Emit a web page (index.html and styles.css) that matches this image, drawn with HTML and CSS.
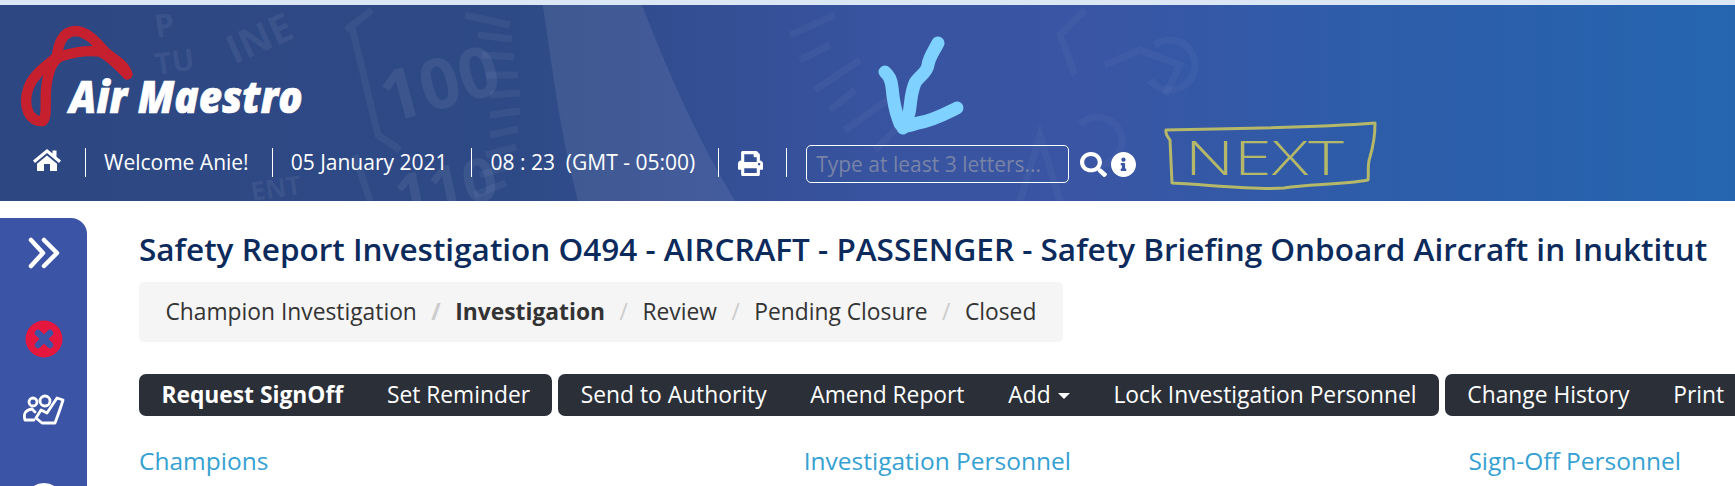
FILE: index.html
```html
<!DOCTYPE html>
<html lang="en">
<head>
<meta charset="utf-8">
<title>Safety Report Investigation</title>
<link rel="stylesheet" href="styles.css">
</head>
<body>
<div class="strip"></div>
<header class="header">
  <svg class="watermark" viewBox="0 0 1735 196" width="1735" height="196" aria-hidden="true">
    <path class="band" d="M542 -5C552 60 560 130 578 196H735C695 130 665 60 640 -5Z"/>
    <g class="mark">
      <text x="0" y="0" font-size="70" transform="translate(388 118) rotate(-15)">100</text>
      <text x="0" y="0" font-size="60" transform="translate(400 214) rotate(-12)">110</text>
      <text x="0" y="0" font-size="40" transform="translate(234 60) rotate(-24)">INE</text>
      <text x="0" y="0" font-size="30" transform="translate(156 70) rotate(-8)">TU</text>
      <text x="0" y="0" font-size="32" transform="translate(156 33) rotate(-8)">P</text>
      <text x="0" y="0" font-size="26" transform="translate(252 196) rotate(-8)">ENT</text>
      <path class="tick" d="M346 25L372 5M352 22L378 130L400 145M355 150L370 196"/>
      <path class="tick" d="M465 10L510 20M478 30L512 34M482 50L514 52M486 70L518 70M490 90L520 88M490 110L520 106M490 130L518 124M486 150L516 142M480 170L512 160M474 190L506 178"/>
      <path class="tick faint" d="M790 30L835 10M800 55L830 40M815 85L860 55M830 105L855 85M845 125L895 90M875 145L905 115"/>
      <path class="tick faint" d="M1075 70L1060 30L1085 5M1105 60L1140 45L1180 60L1165 90"/>
      <path class="tick faint" d="M1020 196L1040 130L1060 196M1080 120A24 24 0 1 1 1100 160M1155 40A25 25 0 1 1 1150 75"/>
    </g>
  </svg>
  <svg class="scribble" viewBox="0 0 1735 196" width="1735" height="196" aria-hidden="true">
    <path class="arrow" d="M938 38C934 46 929 52 928 60C927 68 918 72 915 78C910 90 911 100 909 108C907 116 904 119 903 123"/>
    <path class="arrow" d="M885 67C889 71 891 74 892 82C893 94 896 108 899 116C901 124 908 121 918 118C932 116 945 109 957 103"/>
    <path class="note" d="M1166 125C1165 130 1168 132 1170 135L1172 178L1190 179C1220 181 1260 185 1284 183C1310 179 1340 180 1368 175C1369 168 1367 160 1370 152C1373 142 1375 132 1375 118C1310 123 1230 124 1166 125Z"/>
    <text class="note-text" x="1185" y="170" font-size="48" textLength="159" lengthAdjust="spacingAndGlyphs">NEXT</text>
  </svg>
  <a class="logo" href="#" aria-label="Air Maestro">
    <svg viewBox="0 0 960 360" width="320" height="120">
      <g transform="translate(30 15)">
        <path class="ribbon" d="M98 318C55 322 38 270 55 220C70 175 115 150 140 125C145 90 155 50 195 48C235 48 265 90 290 115C315 135 345 150 352 178"/>
        <path class="ribbon" d="M352 178C325 150 295 120 270 110C225 105 180 115 150 125C122 140 112 180 108 225C105 270 112 305 98 318"/>
      </g>
      <text class="logo-text" x="208" y="309" font-size="135" textLength="700" lengthAdjust="spacingAndGlyphs">Air Maestro</text>
    </svg>
  </a>
  <nav class="nav">
    <a class="nav-icon home" href="#" aria-label="Home">
      <svg viewBox="0 0 28 22" width="28" height="22"><path d="M14 0L0 11.5L2 14L14 4L26 14L28 11.5L23.5 7.8V1.5H19.5V4.4ZM4 14.8L14 6.4L24 14.8V22H17V15H11V22H4Z"/></svg>
    </a>
    <span class="sep"></span>
    <span class="nav-text">Welcome Anie!</span>
    <span class="sep sep-tight"></span>
    <span class="nav-text">05 January 2021</span>
    <span class="sep"></span>
    <span class="nav-text">08 : 23 &nbsp;(GMT - 05:00)</span>
    <span class="sep sep-tight"></span>
    <a class="nav-icon print" href="#" aria-label="Print">
      <svg viewBox="0 0 512 512" width="27" height="25"><path d="M448 192V77.25c0-8.49-3.37-16.62-9.37-22.63L393.37 9.37c-6-6-14.14-9.37-22.63-9.37H96C78.33 0 64 14.33 64 32v160c-35.35 0-64 28.65-64 64v112c0 8.84 7.16 16 16 16h48v96c0 17.67 14.33 32 32 32h320c17.67 0 32-14.33 32-32v-96h48c8.84 0 16-7.16 16-16V256c0-35.35-28.65-64-64-64zm-64 256H128v-96h256v96zm0-224H128V64h192v48c0 8.84 7.16 16 16 16h48v96zm48 72c-13.25 0-24-10.75-24-24 0-13.26 10.75-24 24-24s24 10.74 24 24c0 13.25-10.75 24-24 24z"/></svg>
    </a>
    <span class="sep sep-last"></span>
    <input class="search" type="text" placeholder="Type at least 3 letters...">
    <a class="nav-icon search-icon" href="#" aria-label="Search">
      <svg viewBox="0 0 512 512" width="27" height="25" preserveAspectRatio="none"><path d="M505 442.7L405.3 343c-4.5-4.5-10.6-7-17-7H372c27.6-35.3 44-79.7 44-128C416 93.1 322.9 0 208 0S0 93.1 0 208s93.1 208 208 208c48.3 0 92.7-16.4 128-44v16.3c0 6.4 2.5 12.5 7 17l99.7 99.7c9.4 9.4 24.6 9.4 33.9 0l28.3-28.3c9.4-9.4 9.4-24.6.1-34zM208 336c-70.7 0-128-57.2-128-128 0-70.7 57.2-128 128-128 70.7 0 128 57.2 128 128 0 70.7-57.2 128-128 128z"/></svg>
    </a>
    <a class="nav-icon info-icon" href="#" aria-label="Information">
      <svg viewBox="8 8 496 496" width="25" height="25"><path d="M256 8C119.043 8 8 119.083 8 256c0 136.997 111.043 248 248 248s248-111.003 248-248C504 119.083 392.957 8 256 8zm0 110c23.196 0 42 18.804 42 42s-18.804 42-42 42-42-18.804-42-42 18.804-42 42-42zm56 254c0 6.627-5.373 12-12 12h-88c-6.627 0-12-5.373-12-12v-24c0-6.627 5.373-12 12-12h12v-64h-12c-6.627 0-12-5.373-12-12v-24c0-6.627 5.373-12 12-12h64c6.627 0 12 5.373 12 12v100h12c6.627 0 12 5.373 12 12v24z"/></svg>
    </a>
  </nav>
</header>
<div class="page">
  <aside class="sidebar">
    <svg class="side-chevrons" viewBox="0 0 32 32" width="32" height="32"><path d="M3 3L15 16L3 29M16 3L29 16L16 29"/></svg>
    <svg class="side-close" viewBox="0 0 38 38" width="38" height="38"><circle cx="19" cy="19" r="18.5"/><path d="M13 13L25 25M25 13L13 25"/></svg>
    <svg class="side-people" viewBox="6 9 42 32" width="42" height="32"><circle cx="16" cy="17" r="4"/><circle cx="28" cy="16" r="5"/><path d="M8 35C6 28 9 25 15 24L18 27M8 35H17M19 33L25 38H38C41 30 44 22 46 15L40 13L30 28L24 25Z"/></svg>
    <div class="side-globe"></div>
  </aside>
  <main class="content">
    <h1 class="title">Safety Report Investigation O494 - AIRCRAFT - PASSENGER - Safety Briefing Onboard Aircraft in Inuktitut</h1>
    <ol class="crumbs">
      <li>Champion Investigation</li>
      <li class="current">Investigation</li>
      <li>Review</li>
      <li>Pending Closure</li>
      <li>Closed</li>
    </ol>
    <div class="toolbar">
      <div class="btn-group">
        <a class="btn strong" href="#">Request SignOff</a>
        <a class="btn" href="#">Set Reminder</a>
      </div>
      <div class="btn-group">
        <a class="btn" href="#">Send to Authority</a>
        <a class="btn" href="#">Amend Report</a>
        <a class="btn" href="#">Add<span class="caret"></span></a>
        <a class="btn" href="#">Lock Investigation Personnel</a>
      </div>
      <div class="btn-group">
        <a class="btn" href="#">Change History</a>
        <a class="btn" href="#">Print</a>
      </div>
    </div>
    <div class="columns">
      <h2>Champions</h2>
      <h2>Investigation Personnel</h2>
      <h2>Sign-Off Personnel</h2>
    </div>
  </main>
</div>
</body>
</html>
```

FILE: styles.css
```css
* { box-sizing: border-box; }
html, body { margin: 0; padding: 0; height: 486px; overflow: hidden; background: #fff; }
body { font-family: "Open Sans", "Liberation Sans", sans-serif; }
a { color: inherit; text-decoration: none; }

.strip { height: 5px; background: #dce7f6; }

.header {
  position: relative;
  height: 196px;
  padding-top: 5px;
  overflow: hidden;
  color: #fff;
  background: linear-gradient(90deg, #2d4782 0%, #2e4a86 30%, #38539f 50%, #3a55a3 62%, #2e5ca9 78%, #2565b0 100%);
}
.watermark, .scribble { position: absolute; left: 0; top: 0; pointer-events: none; }
.band { fill: #fff; fill-opacity: .08; }
.mark text { font-family: "Open Sans", sans-serif; font-weight: 700; fill: #fff; fill-opacity: .07; }
.tick { fill: none; stroke: #fff; stroke-opacity: .05; stroke-width: 7; }
.faint { stroke-opacity: .035; }
.arrow { fill: none; stroke: #7fd1ff; stroke-width: 13; stroke-linecap: round; stroke-linejoin: round; }
.note { fill: none; stroke: #b4b868; stroke-width: 3; stroke-linejoin: round; }
.note-text { font-family: "Open Sans", sans-serif; font-weight: 300; fill: #b4b868; }

.logo { position: relative; display: block; width: 320px; height: 120px; }
.logo svg { display: block; }
.ribbon { fill: none; stroke: #c6202f; stroke-width: 31; stroke-linecap: round; stroke-linejoin: round; }
.logo-text { font-family: "Open Sans", sans-serif; font-weight: 800; font-style: italic; fill: #fff; stroke: #fff; stroke-width: 2; }

.nav {
  position: relative;
  display: flex;
  align-items: center;
  height: 38px;
  margin-top: 15px;
  padding-left: 33px;
  font-size: 21px;
}
.nav-icon { display: block; line-height: 0; }
.nav-icon svg { fill: #fff; display: block; }
.home { margin-bottom: 9px; }
.print { margin-bottom: 2px; }
.nav-text { margin-bottom: 4px; white-space: pre; }
.sep { width: 1px; height: 29px; margin: 0 18px 4px 24px; background: #fff; flex: none; }
.sep-tight { margin-left: 23px; }
.sep-last { margin-right: 19px; margin-left: 22px; }
.search {
  flex: none;
  width: 263px;
  height: 38px;
  padding: 0 9px;
  border: 1px solid #fff;
  border-radius: 5px;
  background: transparent;
  color: #fff;
  font: 21px "Open Sans", sans-serif;
  outline: none;
}
.search::placeholder { color: #7883a6; opacity: 1; }
.search-icon { margin-left: 11px; }
.info-icon { margin-left: 4px; }

.page { display: flex; align-items: flex-start; height: 285px; overflow: hidden; }
.sidebar {
  flex: none;
  display: flex;
  flex-direction: column;
  align-items: center;
  width: 87px;
  height: 268px;
  margin-top: 17px;
  padding: 19px 0 0 0;
  overflow: hidden;
  border-top-right-radius: 16px;
  background: #3b54a5;
}
.sidebar > * { flex: none; }
.side-chevrons { fill: none; stroke: #fff; stroke-width: 4.5; stroke-linecap: round; stroke-linejoin: round; }
.side-close { margin-top: 51px; }
.side-close circle { fill: #e5173f; }
.side-close path { fill: none; stroke: #3b54a5; stroke-width: 6.5; stroke-linecap: round; }
.side-people { margin-top: 36px; fill: none; stroke: #fff; stroke-width: 2.8; stroke-linecap: round; stroke-linejoin: round; }
.side-globe { width: 38px; height: 38px; margin-top: 57px; border-radius: 50%; background: #8fc9c9; border: 3px solid #fff; }

.content { flex: 1; min-width: 0; padding: 0 0 0 52px; overflow: hidden; }
.title {
  margin: 21px 0 0;
  height: 60px;
  line-height: 53px;
  font-size: 31.5px;
  font-weight: 600;
  color: #0c2b5c;
  white-space: nowrap;
}
.crumbs {
  display: flex;
  width: 924px;
  height: 60px;
  margin: 0;
  padding: 0 0 2px 26.5px;
  align-items: center;
  list-style: none;
  border-radius: 5px;
  background: #f5f5f5;
  font-size: 22.8px;
  color: #333;
  white-space: nowrap;
}
.crumbs li { flex: none; }
.crumbs li + li::before { content: "/"; margin: 0 14.5px; color: #ccc; }
.crumbs .current { font-weight: 700; }
.toolbar { display: flex; gap: 6px; margin-top: 32px; width: 1700px; }
.btn-group { display: flex; height: 42px; flex: none; padding: 0 .5px 2px; border-radius: 7px; background: #2b2f38; }
.btn { display: flex; align-items: center; padding: 0 21.9px; font-size: 22.8px; color: #fff; white-space: nowrap; }
.strong { font-weight: 700; }
.caret { width: 0; height: 0; margin-left: 7px; margin-top: 3px; border: 6.5px solid transparent; border-top-color: #fff; border-bottom: 0; }
.columns { display: grid; grid-template-columns: repeat(3, 664.7px); margin-top: 28px; }
.columns h2 { margin: 0; font-size: 24.5px; line-height: 34px; font-weight: 400; color: #35a1d2; white-space: nowrap; }
```
